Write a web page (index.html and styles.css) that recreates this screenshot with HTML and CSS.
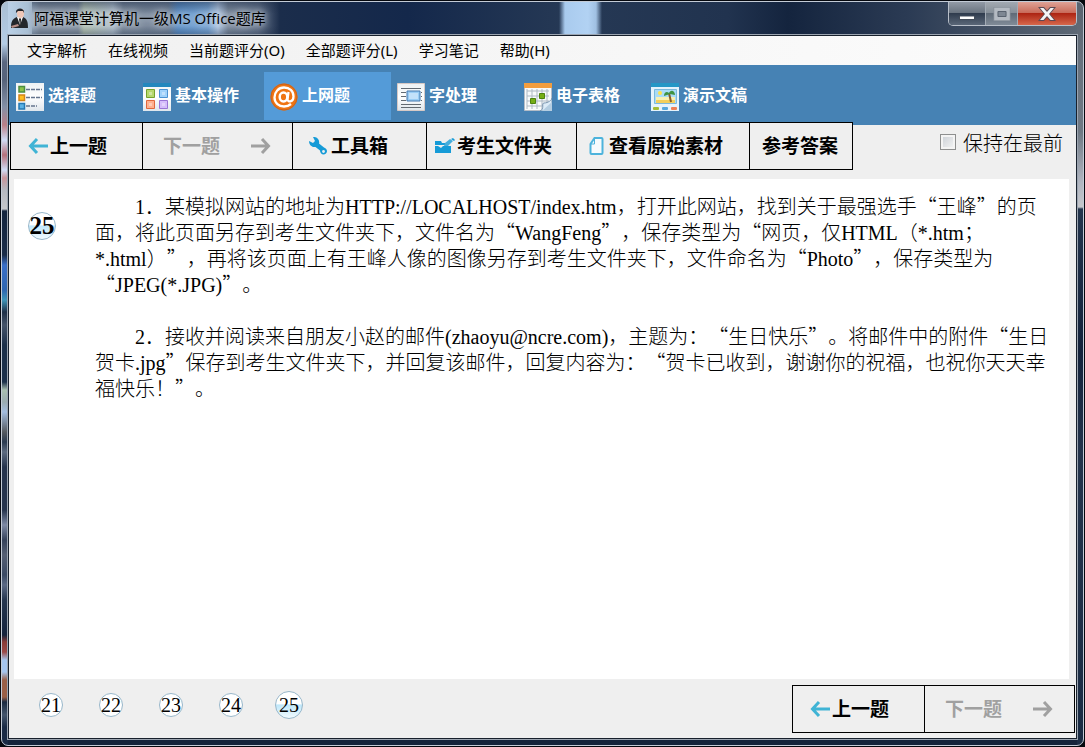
FILE: index.html
```html
<!DOCTYPE html>
<html lang="zh-CN">
<head>
<meta charset="utf-8">
<title>阿福课堂计算机一级MS Office题库</title>
<link rel="stylesheet" href="styles.css">
</head>
<body>
<svg class="defs" aria-hidden="true">
  <defs>
    <linearGradient id="paper" x2="0" y2="1"><stop offset="0" stop-color="#eef2f4"/><stop offset=".5" stop-color="#fff"/><stop offset="1" stop-color="#dfe6ec"/></linearGradient>
    <symbol id="arrow-left" viewBox="0 0 20 18"><path d="M9 2 2.500 9 9 16M3 9h17" fill="none" stroke="currentColor" stroke-width="3"/></symbol>
    <symbol id="arrow-right" viewBox="0 0 20 18"><path d="m11 2 6.500 7L11 16M17 9H0" fill="none" stroke="currentColor" stroke-width="3"/></symbol>
  </defs>
</svg>
<div class="window">
  <header class="titlebar">
    <svg class="app-icon" viewBox="0 0 18 22" aria-hidden="true">
      <path d="M0 20c0-6 1-9 6-11l3 4 3-4c4 2 5 4 5 11z" fill="#24272b"/>
      <path d="m6 9 3 8 3-8z" fill="#f5f5f5"/><path d="m8 11 1-1 1 1-.500 6H9z" fill="#222"/>
      <path d="M6 3c0-3 7-3 7 0v3c0 3-2 4-3.500 4S6 9 6 6z" fill="#efc7b8"/>
      <path d="M5 5c-1-6 9-6 8 0l-1-2H7z" fill="#20242a"/>
      <path d="m0 18 7-2 1 2-7 2z" fill="#b98f87"/>
    </svg>
    <h1 class="title">阿福课堂计算机一级MS Office题库</h1>
    <div class="window-buttons">
      <button class="win-btn" aria-label="最小化"><svg width="16" height="4" viewBox="0 0 16 4"><path d="M0 0h16v4H0z" fill="#444d5a"/><path d="M1 .500h14v2.500H1z" fill="#fff"/></svg></button>
      <button class="win-btn maximize" aria-label="最大化" disabled><svg width="18" height="14" viewBox="0 0 18 14"><path d="M3 2.500h12v9H3z" fill="none" stroke="#878f99" stroke-width="5"/><path d="M3 2.500h12v9H3z" fill="none" stroke="#b4bac2" stroke-width="3.500"/><path d="M5 4.500h8v5H5z" fill="#7e8793" stroke="#59626f"/></svg></button>
      <button class="win-btn close" aria-label="关闭"><svg width="18" height="16" viewBox="0 0 18 16"><path d="M0 1h6l3 3.500L12 1h6l-6 7 6 7h-6l-3-3.500L6 15H0l6-7z" fill="#5b4a54"/><path d="M2 2h3.500L9 6l3.500-4H16l-5 6 5 6h-3.500L9 10l-3.500 4H2l5-6z" fill="#f4f4f4"/></svg></button>
    </div>
  </header>
  <div class="client">
    <nav class="menu">
      <button>文字解析</button><button>在线视频</button><button>当前题评分(O)</button><button>全部题评分(L)</button><button>学习笔记</button><button>帮助(H)</button>
    </nav>
    <nav class="tabs">
      <button class="tab"><svg viewBox="0 0 28 28"><path d="M0 0h28v28H0z" fill="url(#paper)"/><path d="M3 3.500h5.500v5.500H3z" fill="#8bc34a" stroke="#4c8d42" stroke-width="1.500"/><path d="M3 12h5.500v5.500H3z" fill="#ffc020" stroke="#d48518" stroke-width="1.500"/><path d="M3 20.500h5.500V26H3z" fill="#5bb2e5" stroke="#2478b3" stroke-width="1.500"/><path d="M10 6.500h16M10 14.500h16M10 23h11" stroke="#65758e" stroke-width="1.500" stroke-dasharray="4 1"/></svg><span>选择题</span></button>
      <button class="tab"><svg viewBox="0 0 28 28"><path d="M0 0h28v28H0z" fill="url(#paper)"/><path d="M0 0h28v4H0z" fill="#2387bd"/><path d="M3.500 6.500h8v8h-8z" fill="#b6d86d" stroke="#76a22e"/><path d="M16.500 6.500h8v8h-8z" fill="#a0d2fb" stroke="#4b92d2"/><path d="M3.500 17.500h8v8h-8z" fill="#ffb08e" stroke="#e1683c"/><path d="M16.500 17.500h8v8h-8z" fill="#d5bdfb" stroke="#9974d6"/><path d="M6 9h3v3H6zM19 9h3v3h-3zM6 20h3v3H6zM19 20h3v3h-3z" fill="#fff" opacity=".35"/></svg><span>基本操作</span></button>
      <button class="tab active"><svg viewBox="0 0 28 28"><circle cx="14" cy="14" r="13.500" fill="#ef7412"/><circle cx="14" cy="14" r="13" fill="none" stroke="#c9631d"/><ellipse cx="13.500" cy="14" rx="3.800" ry="4.500" fill="none" stroke="#fff" stroke-width="2.500"/><path d="m18.500 9-1 7c0 4 6 3 6-2.500C23.500 8 19.500 4.500 14 4.500S4.500 9 4.500 14.500 9 23.500 14 23.500c3 0 5-.800 7-2.500" fill="none" stroke="#fff" stroke-width="2.300"/></svg><span>上网题</span></button>
      <button class="tab"><svg viewBox="0 0 28 28"><path d="M.500.500h27v27H.500z" fill="url(#paper)" stroke="#d7c9c5"/><path d="M4 5.500h20M4 9.500h5M4 13.500h5M4 17.500h5M24 9.500h1M24 13.500h1M24 17.500h1M4 21.500h20M4 24.500h20" stroke="#626a72"/><path d="M10 8h13v10H10z" fill="#9acdf5" stroke="#4377ad"/><path d="M12 10h9v6h-9z" fill="#c3e1fa"/></svg><span>字处理</span></button>
      <button class="tab"><svg viewBox="0 0 28 28"><path d="M.500.500h27v27H.500z" fill="#f8fafb" stroke="#b4bcc6"/><path d="M0 0h28v5H0z" fill="#f29d3e"/><path d="M3 8h22M3 13h22M3 18h22M3 23h22M3 6v20M8 6v20M13 6v20M18 6v20M23 6v20" stroke="#aeb9c4"/><path d="M15.500 10.500h5v5h-5zM6.500 15.500h5v5h-5z" fill="#75ad15" stroke="#4d8310"/><path d="M16 28c5-2 1-8 4-8 4 0 8-3 8-5v13z" fill="#dcebf7" stroke="#7894af"/><path d="m18 28 10-9v9z" fill="#b4cde1"/></svg><span>电子表格</span></button>
      <button class="tab"><svg viewBox="0 0 28 28"><path d="M0 0h28v28H0z" fill="#e5f3fc"/><path d="M0 0h28v4H0z" fill="#2597c6"/><path d="M3.500 6.500h22v14h-22z" fill="#a9dcf7" stroke="#7bbadd"/><path d="M5 17h19v3H5z" fill="#f2cf5b"/><path d="M5 14h19v3H5z" fill="#f8f0b2"/><circle cx="9" cy="10" r="2" fill="#ffe24a"/><path d="m18 10 2 9" stroke="#855d29" stroke-width="2"/><path d="M13 13c0-4 3-5 5-3 2-4 6-2 6 2l-5-1z" fill="#3f9342"/><rect x="2" y="24" width="6" height="3" rx="1" fill="#a5bd35"/><rect x="11" y="24" width="6" height="3" rx="1" fill="#55a8dd"/><rect x="20" y="24" width="6" height="3" rx="1" fill="#ef8054"/></svg><span>演示文稿</span></button>
    </nav>
    <div class="toolbar">
      <div class="actions">
        <button class="action prev"><svg class="arrow"><use href="#arrow-left"/></svg><span>上一题</span></button>
        <button class="action next" disabled><span>下一题</span><svg class="arrow"><use href="#arrow-right"/></svg></button>
        <button class="action tools"><svg class="tool-icon" viewBox="0 0 18 18"><path d="M4 0C8-.500 11 3 10 6.500l5 4c5 2 3 7-.500 7-2 0-3.500-2-3.500-4L6.500 10C3 10.500 0 8 0 4l4 2 2-2z" fill="#169bd7"/><circle cx="14.500" cy="14.500" r="1.400" fill="#eee"/></svg><span>工具箱</span></button>
        <button class="action folder"><svg class="folder-icon" viewBox="0 0 20 16"><path d="M0 3h6l1 2h6v2H0zM0 8h3l3 2 2-2h8v7H0z" fill="#169bd7"/><path d="m9 8 1-3 5-4 3 2-5 5z" fill="#45addb"/><path d="m16 1 2-1 2 2-1 1z" fill="#169bd7"/></svg><span>考生文件夹</span></button>
        <button class="action source"><svg class="page-icon" viewBox="0 0 14 18"><path d="M5 1h7q1 0 1 1v14q0 1-1 1H2q-1 0-1-1V7z" fill="#f7fbfd" stroke="#4db3dc" stroke-width="2"/><path d="M5 1v6H1" fill="none" stroke="#4db3dc"/></svg><span>查看原始素材</span></button>
        <button class="action answer"><span>参考答案</span></button>
      </div>
      <label class="keep-top"><input type="checkbox">保持在最前</label>
    </div>
    <main class="question">
      <div class="number">25</div>
      <div class="text">
        <p>1．某模拟网站的地址为HTTP://LOCALHOST/index.htm，打开此网站，找到关于最强选手<q>王峰</q>的页<br>面，将此页面另存到考生文件夹下，文件名为<q>WangFeng</q>，保存类型为<q>网页，仅HTML（*.htm；<br>*.html）</q>，再将该页面上有王峰人像的图像另存到考生文件夹下，文件命名为<q>Photo</q>，保存类型为<br><q>JPEG(*.JPG)</q>。</p>
        <p>2．接收并阅读来自朋友小赵的邮件(zhaoyu@ncre.com)，主题为：<q>生日快乐</q>。将邮件中的附件<q>生日<br>贺卡.jpg</q>保存到考生文件夹下，并回复该邮件，回复内容为：<q>贺卡已收到，谢谢你的祝福，也祝你天天幸<br>福快乐！</q>。</p>
      </div>
    </main>
    <footer class="footer">
      <div class="pages">
        <button class="page">21</button><button class="page">22</button><button class="page">23</button><button class="page">24</button><button class="page current">25</button>
      </div>
      <div class="actions">
        <button class="action prev"><svg class="arrow"><use href="#arrow-left"/></svg><span>上一题</span></button>
        <button class="action next" disabled><span>下一题</span><svg class="arrow"><use href="#arrow-right"/></svg></button>
      </div>
    </footer>
  </div>
</div>
</body>
</html>
```
FILE: styles.css
```css
* { box-sizing: border-box; }
html, body { height: 100%; }
body {
  margin: 0;
  padding: 1px;
  background: #05080e;
  font-family: "Noto Sans CJK SC", sans-serif;
}
button {
  margin: 0;
  padding: 0;
  border: 0;
  background: none;
  color: inherit;
  font: inherit;
  white-space: nowrap;
}
h1, p { margin: 0; font-weight: normal; }
.defs { position: absolute; width: 0; height: 0; }

.window {
  display: flex;
  flex-direction: column;
  min-height: 100%;
  padding: 0 6px 6px;
  border: 1px solid #c3cbd6;
  border-radius: 7px;
  background:
    linear-gradient(#a9bfd4 0, #b3cce5 42px, #5a6780 60px, #56637a 78px, #8390a6 105px, #b98088 123px, #d0dcf5 138px, #b5727c 153px, #d0dcf5 168px, #c8969c 176px, #b5b8c0 188px, #c5c7cb 207px, #14253f 209px, #1a2c48 253px, #3a6fc8 263px, #2f66b0 288px, #3f95b8 298px, #1e3048 310px, #45546a 323px, #1c304a 343px, #1c304a 380px, #a9bfb0 388px, #9aabb0 400px, #a3bde0 410px, #555a60 430px, #2a3a50 440px, #5d6b80 450px, #26344d 465px, #26344d 508px, #7e8aa5 523px, #35425a 538px, #566074 553px, #3b4a64 573px, #5c6a85 583px, #26364f 598px, #14233d 633px, #8a3c38 640px, #9a4a48 650px, #a5c5ee 658px, #a5c5ee 670px, #9a6048 678px, #9a6048 695px, #1a2a40 700px, #45566c 713px, #1a2b45 725px) 0 0 / 6px 100% no-repeat,
    linear-gradient(#59636f 0, #68727e 60px, #6f7984 130px, #b0b5c0 180px, #c5c7cb 205px, #24354d 207px, #14233c 350px, #24344c 450px, #1b2c44 100%) 100% 0 / 6px 100% no-repeat,
    #15243b;
}
.titlebar {
  display: flex;
  align-items: flex-start;
  height: 33px;
  padding-left: 2px;
  background:
    linear-gradient(90deg, transparent 551px, #a9cbee 557px, #b2d2f3 580px, #a0c0e2 588px, transparent 594px),
    linear-gradient(#1b2c4880, transparent 12px, transparent 24px, #1b2c4860) 24px 0 / 250px 100% no-repeat,
    linear-gradient(90deg, #b9d0e6 0, #a9bfd4 20px, #8793a2 32px, #8793a2 70px, #b5c3b0 76px, #b4c2cd 105px, #7e8b9c 115px, #77869a 160px, #5e93cc 170px, #79a7d7 200px, #b7cde8 210px, #7d8b9d 220px, #66748a 250px, #1b2d4b 272px, #14284b 400px, #263955 560px, #21334f 720px, #14243e 780px, #2b3b54 900px, #5d6875 100%);
}
.app-icon { width: 18px; height: 22px; margin: 6px 5px 0 1px; }
.title {
  flex: 1;
  margin-top: 6px;
  font: 15px/20px "Open Sans", "Noto Sans CJK SC", sans-serif;
  text-shadow: 0 0 6px #c5ced8, 0 0 8px #c5ced8;
}
.window-buttons {
  display: flex;
  height: 24px;
  border: 1px solid #b8bfc9;
  border-top: 0;
  border-radius: 0 0 5px 5px;
  overflow: hidden;
}
.win-btn {
  display: grid;
  place-items: center;
  width: 36px;
  background: linear-gradient(#929aa6, #69737f 48%, #303c4e 50%, #5a6778);
}
.win-btn:first-child svg { margin-top: 8px; }
.win-btn.maximize { width: 33px; border-left: 1px solid #a3abb5; border-right: 1px solid #a3abb5; background: linear-gradient(#a2a9b1, #858e98 48%, #606b78 50%, #808b97); }
.win-btn.close { width: 58px; background: linear-gradient(#dfa296, #c86a58 48%, #ad2513 50%, #d6674b); }

.client {
  display: flex;
  flex: 1;
  flex-direction: column;
  border: 1px solid #17202c;
  outline: 1px solid #9ca5b1;
  background: #efefef;
}
.menu {
  display: flex;
  gap: 21px;
  padding: 0 18px;
  background: linear-gradient(90deg, #f0f0f0, #fcfcfc);
  font: 15px/29px "Noto Sans", "Noto Sans CJK SC", sans-serif;
}
.tabs {
  display: flex;
  height: 60px;
  padding-top: 7px;
  padding-left: 1px;
  background: #4682b4;
  color: #fff;
  font-size: 16px;
  font-weight: bold;
}
.tab {
  display: flex;
  align-items: center;
  gap: 4px;
  width: 127px;
  height: 48px;
  padding: 1px 0 0 6px;
}
.tab svg { width: 28px; height: 28px; }
.tab span { line-height: 24px; padding-bottom: 6px; }
.tab.active { background: #549bd8; }

.toolbar { display: flex; justify-content: space-between; padding: 0 13px 0 1px; }
.actions { display: flex; }
.toolbar .actions { margin-top: -3px; }
.action {
  display: flex;
  align-items: center;
  height: 48px;
  border: 1px solid #000;
  background: #efefef;
  color: #000;
  font-size: 19px;
  font-weight: bold;
}
.action span { padding-bottom: 3px; line-height: 28px; }
.action + .action { margin-left: -1px; }
.arrow { width: 20px; height: 18px; }
.prev { width: 133px; padding-left: 17px; gap: 2px; }
.prev .arrow { color: #40b4d5; }
.next { width: 151px; padding-left: 20px; gap: 31px; color: #a0a0a0; }
.tools { width: 135px; padding-left: 16px; gap: 4px; }
.folder { width: 151px; padding-left: 8px; gap: 2px; }
.source { width: 174px; padding-left: 12px; gap: 5px; }
.answer { width: 104px; padding-left: 12px; }
.tool-icon { width: 18px; height: 18px; }
.folder-icon { width: 20px; height: 16px; }
.page-icon { width: 15px; height: 18px; }
.keep-top {
  display: flex;
  align-items: center;
  gap: 7px;
  height: 34px;
  font-size: 20px;
  font-weight: 300;
}
.keep-top input {
  appearance: none;
  width: 16px;
  height: 16px;
  margin: 0;
  border: 1px solid #8e8f8f;
  background: linear-gradient(135deg, #c9ced4, #f6f6f6);
  box-shadow: inset 0 0 0 2px #f4f4f4;
}

.question {
  display: flex;
  flex: 1;
  gap: 39px;
  margin: 9px 7px 0 5px;
  padding: 15px 14px;
  background: #fff;
}
.number {
  display: grid;
  place-items: center;
  width: 28px;
  height: 28px;
  margin-top: 18px;
  border: 1px solid #98b7ca;
  border-radius: 50%;
  background: linear-gradient(#fff 45%, #bfe7fa 50%, #f2fbff);
  font: bold 25px/26px "Liberation Serif", serif;
}
.text {
  flex: 1;
  font: 300 20px/26px "Liberation Serif", "Noto Sans CJK SC Light", "Noto Sans CJK SC", serif;
  text-spacing-trim: space-all;
  white-space: nowrap;
}
.text p { text-indent: 40px; }
.text p + p { margin-top: 26px; }
q { quotes: "“" "”"; }
q::before, q::after { font-family: "Noto Sans CJK SC Light", "Noto Sans CJK SC", sans-serif; line-height: 20px; }

.footer { display: flex; justify-content: space-between; padding: 6px 1px 5px 30px; }
.pages { display: flex; gap: 36px; align-items: center; height: 40px; }
.page {
  width: 24px;
  height: 24px;
  border: 1px solid #98b7ca;
  border-radius: 50%;
  background: #fff;
  font: 20px/22px "Liberation Serif", serif;
}
.page.current { width: 28px; height: 28px; margin-left: -4px; background: linear-gradient(#fff 45%, #bfe7fa 50%, #f2fbff); }
```
